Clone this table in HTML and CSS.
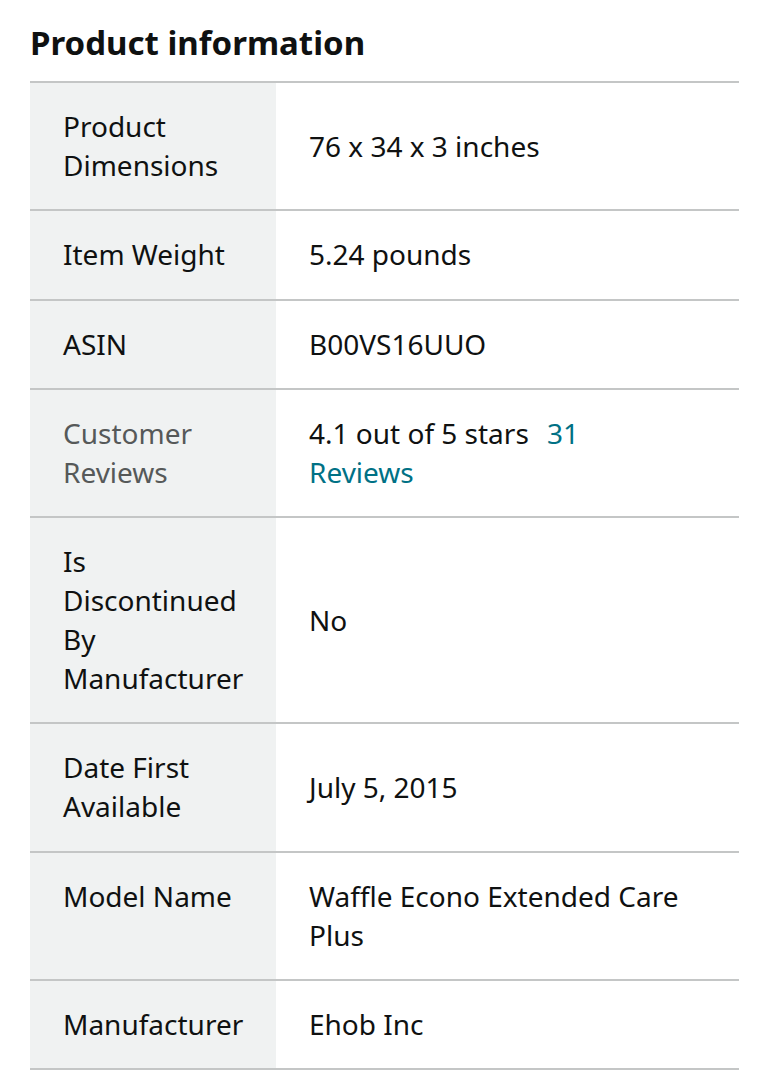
FILE: index.html
```html
<!DOCTYPE html>
<html lang="en">
<head>
<meta charset="utf-8">
<title>Product information</title>
<link rel="stylesheet" href="styles.css">
</head>
<body>
<div class="page">
  <h2 class="title">Product information</h2>
  <table class="info">
    <colgroup>
      <col class="col-label">
      <col class="col-value">
    </colgroup>
    <tbody>
      <tr><th>Product Dimensions</th><td>76 x 34 x 3 inches</td></tr>
      <tr><th>Item Weight</th><td>5.24 pounds</td></tr>
      <tr><th>ASIN</th><td>B00VS16UUO</td></tr>
      <tr><th class="muted">Customer Reviews</th><td>4.1 out of 5 stars <a class="link" href="#">31 Reviews</a></td></tr>
      <tr><th>Is Discontinued By Manufacturer</th><td>No</td></tr>
      <tr><th>Date First Available</th><td>July 5, 2015</td></tr>
      <tr><th>Model Name</th><td>Waffle Econo Extended Care Plus</td></tr>
      <tr><th>Manufacturer</th><td>Ehob Inc</td></tr>
    </tbody>
  </table>
</div>
</body>
</html>
```

FILE: styles.css
```css
html, body {
  margin: 0;
  padding: 0;
  background: #ffffff;
}
body {
  font-family: "Noto Sans", "Open Sans", sans-serif;
  color: #0f1111;
}
.page {
  padding: 22px 30px 0 30px;
}
.title {
  margin: 0 0 17px 0;
  font-size: 33px;
  line-height: 42px;
  font-weight: 700;
  color: #0f1111;
}
.info {
  width: 100%;
  table-layout: fixed;
  border-collapse: separate;
  border-spacing: 0;
  border-top: 2px solid #c4c6c6;
}
.col-label {
  width: 246px;
}
.info th,
.info td {
  font-size: 28px;
  line-height: 39px;
  font-weight: 400;
  text-align: left;
  padding: 24px 33px 24.3px 33px;
  border-bottom: 2px solid #c4c6c6;
}
.info th {
  vertical-align: top;
  padding-right: 30px;
  background: #f0f2f2;
  color: #0f1111;
}
.info th.muted {
  color: #565959;
}
.info td {
  vertical-align: middle;
  padding-right: 55px;
}
.link {
  margin-left: 11px;
  color: #007185;
  text-decoration: none;
}
```
